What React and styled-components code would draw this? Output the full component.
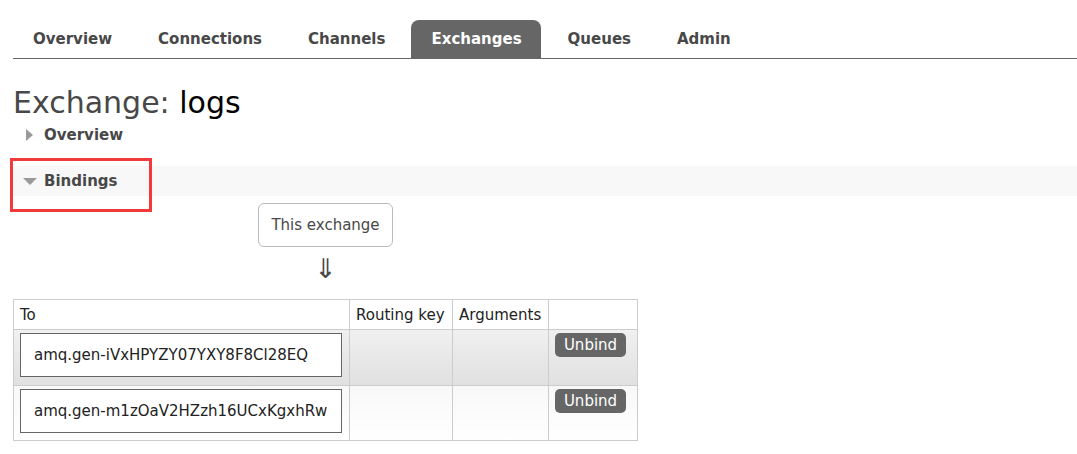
import React from "react";
import styled, { createGlobalStyle } from "styled-components";

const Global = createGlobalStyle`
  html, body { margin: 0; padding: 0; background: #fff; }
  body { font-family: "DejaVu Sans", Verdana, sans-serif; color: #484848; }
`;

const Page = styled.div`
  position: relative;
  padding: 20px 0 0 13px;
  width: 1077px;
  box-sizing: border-box;
`;

const Tabs = styled.ul`
  display: flex;
  gap: 7px;
  list-style: none;
  margin: 0;
  padding: 0;
  border-bottom: 1px solid #666;
  height: 38px;
`;

const Tab = styled.li`
  display: flex;
  align-items: center;
  padding: 0 19px 0 20px;
  height: 38px;
  font-size: 15px;
  font-weight: bold;
  border-radius: 8px 8px 0 0;
  background: ${p => (p.$active ? "#666" : "transparent")};
  color: ${p => (p.$active ? "#fff" : "#484848")};
`;

const Title = styled.h1`
  margin: 26px 0 0 0;
  font-size: 30px;
  line-height: 36px;
  font-weight: normal;
  color: #484848;
  span { color: #000; }
`;

const SectionHeader = styled.div`
  display: flex;
  align-items: center;
  gap: 7px;
  height: 30px;
  padding-left: 10px;
  font-size: 15px;
  font-weight: bold;
  color: #484848;
  background: ${p => (p.$open ? "#f8f8f8" : "transparent")};
  margin-top: ${p => p.$mt || 0}px;
`;

const Caret = styled.svg`
  width: 14px;
  height: 14px;
  flex: none;
`;

const Highlight = styled.div`
  position: absolute;
  left: 10px;
  top: 158px;
  width: 142px;
  height: 54px;
  border: 3px solid #f23a3a;
  box-sizing: border-box;
`;

const Diagram = styled.div`
  display: flex;
  flex-direction: column;
  align-items: center;
  width: 135px;
  margin: 7px 0 0 245px;
`;

const SourceBox = styled.div`
  width: 135px;
  height: 44px;
  box-sizing: border-box;
  border: 1px solid #bbb;
  border-radius: 6px;
  display: flex;
  align-items: center;
  justify-content: center;
  font-size: 15px;
  color: #484848;
`;

const Arrow = styled.div`
  font-size: 27px;
  line-height: 28px;
  margin-top: 8px;
  color: #484848;
`;

const Table = styled.table`
  border-collapse: collapse;
  margin-top: 16px;
  font-size: 15px;
  color: #222;
`;

const Th = styled.th`
  border: 1px solid #ccc;
  height: 30px;
  padding: 0 6px;
  font-weight: normal;
  text-align: left;
  width: ${p => p.$w}px;
  box-sizing: border-box;
  background: #fff;
`;

const Row = styled.tr`
  background: ${p =>
    p.$alt
      ? "linear-gradient(#f8f8f8, #ffffff)"
      : "linear-gradient(#f0f0f0, #e0e0e0)"};
`;

const Td = styled.td`
  border: 1px solid #ccc;
  padding: 3px 6px;
  vertical-align: top;
  height: ${p => p.$h}px;
  box-sizing: border-box;
`;

const NameBox = styled.div`
  width: 322px;
  height: 44px;
  box-sizing: border-box;
  border: 1px solid #666;
  background: #fff;
  display: flex;
  align-items: center;
  padding-left: 13px;
  font-size: 15px;
  color: #222;
`;

const Button = styled.button`
  background: #666;
  color: #fff;
  border: none;
  border-radius: 5px;
  font-family: inherit;
  font-size: 15px;
  height: 24px;
  width: 71px;
  padding: 0;
  margin-top: 0;
`;

const TriangleRight = () => (
  <Caret viewBox="0 0 14 14">
    <polygon points="3,1 10,7 3,13" fill="#999" />
  </Caret>
);

const TriangleDown = () => (
  <Caret viewBox="0 0 14 14">
    <polygon points="0,4 14,4 7,11" fill="#999" />
  </Caret>
);

const bindings = [
  "amq.gen-iVxHPYZY07YXY8F8Cl28EQ",
  "amq.gen-m1zOaV2HZzh16UCxKgxhRw",
];

export default function App() {
  return (
    <>
      <Global />
      <Page>
        <Tabs>
          <Tab>Overview</Tab>
          <Tab>Connections</Tab>
          <Tab>Channels</Tab>
          <Tab $active>Exchanges</Tab>
          <Tab>Queues</Tab>
          <Tab>Admin</Tab>
        </Tabs>
        <Title>
          Exchange: <span>logs</span>
        </Title>
        <SectionHeader $mt={-1}>
          <TriangleRight />
          Overview
        </SectionHeader>
        <SectionHeader $open $mt={16}>
          <TriangleDown />
          Bindings
        </SectionHeader>
        <Diagram>
          <SourceBox>This exchange</SourceBox>
          <Arrow>⇓</Arrow>
        </Diagram>
        <Table>
          <thead>
            <tr>
              <Th $w={336}>To</Th>
              <Th $w={103}>Routing key</Th>
              <Th $w={96}>Arguments</Th>
              <Th $w={89}></Th>
            </tr>
          </thead>
          <tbody>
            {bindings.map((b, i) => (
              <Row key={b} $alt={i % 2 === 1}>
                <Td $h={i === 0 ? 56 : 55}>
                  <NameBox>{b}</NameBox>
                </Td>
                <Td />
                <Td />
                <Td>
                  <Button>Unbind</Button>
                </Td>
              </Row>
            ))}
          </tbody>
        </Table>
        <Highlight />
      </Page>
    </>
  );
}
